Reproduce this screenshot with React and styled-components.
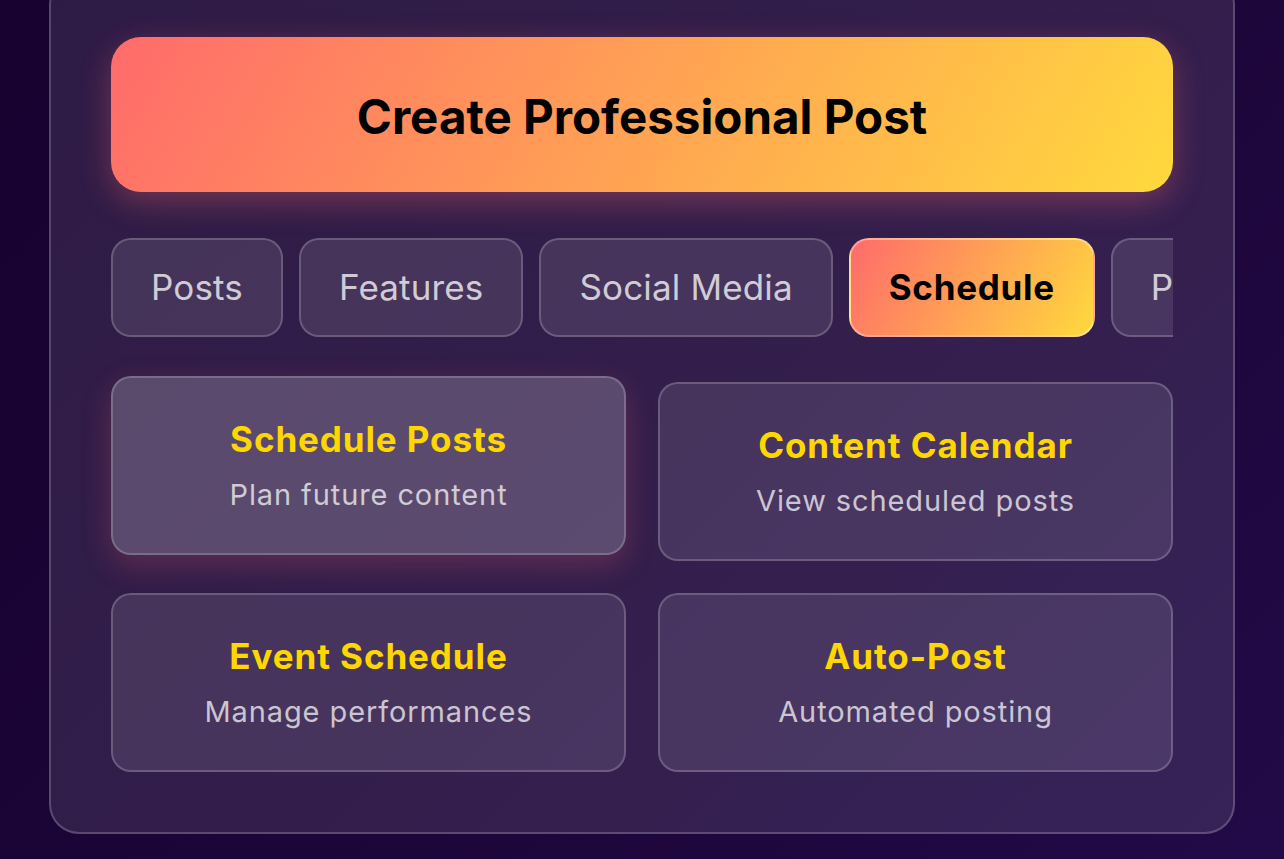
import React, { useState } from 'react';
import styled, { createGlobalStyle } from 'styled-components';

const GlobalStyle = createGlobalStyle`
  html, body {
    margin: 0;
    padding: 0;
    height: 100%;
    overflow: hidden;
  }
  body {
    background: linear-gradient(135deg, #170230 0%, #1c0538 55%, #220a48 100%);
    font-family: Inter, "Noto Sans", "Liberation Sans", sans-serif;
  }
`;

const Page = styled.div`
  min-height: 100vh;
  display: flex;
  justify-content: center;
  align-items: flex-start;
`;

const Panel = styled.div`
  width: 1186px;
  box-sizing: border-box;
  margin-top: -25px;
  padding: 60px;
  background: rgba(255, 255, 255, 0.1);
  border: 2px solid rgba(255, 255, 255, 0.2);
  border-radius: 30px;
  display: flex;
  flex-direction: column;
`;

const CreateButton = styled.button`
  height: 155px;
  padding: 4px 0 0;
  border: none;
  border-radius: 30px;
  background: linear-gradient(120deg, #ff6b6b 0%, #ffd93d 100%);
  box-shadow: 0 10px 32px rgba(255, 107, 107, 0.32);
  font-family: inherit;
  font-size: 47.5px;
  font-weight: 700;
  color: #000;
  cursor: pointer;
`;

const Tabs = styled.div`
  margin-top: 46px;
  display: flex;
  gap: 16px;
  overflow: hidden;
`;

const Tab = styled.button`
  flex: none;
  padding: 27px 38px;
  border-radius: 20px;
  font-family: inherit;
  font-size: 35px;
  line-height: 41px;
  cursor: pointer;
  border: 2px solid ${p => (p.$active ? 'rgba(255, 255, 255, 0.35)' : 'rgba(255, 255, 255, 0.2)')};
  background: ${p => (p.$active ? 'linear-gradient(120deg, #ff6b6b 0%, #ffd93d 100%)' : 'rgba(255, 255, 255, 0.1)')};
  color: ${p => (p.$active ? '#000' : 'rgba(255, 255, 255, 0.75)')};
  font-weight: ${p => (p.$active ? 700 : 400)};
  letter-spacing: ${p => (p.$active ? '0.7px' : '0.15px')};
`;

const Grid = styled.div`
  margin-top: 45px;
  display: grid;
  grid-template-columns: 1fr 1fr;
  gap: 32px;
`;

const Card = styled.div`
  height: 179px;
  box-sizing: border-box;
  border-radius: 20px;
  border: 2px solid rgba(255, 255, 255, 0.2);
  background: ${p => (p.$hover ? 'rgba(255, 255, 255, 0.2)' : 'rgba(255, 255, 255, 0.1)')};
  transform: ${p => (p.$hover ? 'translateY(-6px)' : 'none')};
  box-shadow: ${p => (p.$hover ? '0 10px 30px rgba(255, 107, 107, 0.22)' : 'none')};
  display: flex;
  flex-direction: column;
  align-items: center;
  justify-content: center;
  gap: 19px;
  text-align: center;
`;

const CardTitle = styled.div`
  color: #ffd700;
  font-size: 35px;
  line-height: 40px;
  font-weight: 700;
  letter-spacing: 0.9px;
`;

const CardText = styled.div`
  color: rgba(255, 255, 255, 0.72);
  font-size: 29px;
  line-height: 34px;
  letter-spacing: 0.9px;
`;

const tabs = ['Posts', 'Features', 'Social Media', 'Schedule', 'Promote'];

const cards = [
  { title: 'Schedule Posts', text: 'Plan future content' },
  { title: 'Content Calendar', text: 'View scheduled posts' },
  { title: 'Event Schedule', text: 'Manage performances' },
  { title: 'Auto-Post', text: 'Automated posting' },
];

export default function App() {
  const [active, setActive] = useState('Schedule');

  return (
    <Page>
      <GlobalStyle />
      <Panel>
        <CreateButton>Create Professional Post</CreateButton>
        <Tabs>
          {tabs.map(t => (
            <Tab key={t} $active={t === active} onClick={() => setActive(t)}>
              {t}
            </Tab>
          ))}
        </Tabs>
        <Grid>
          {cards.map((c, i) => (
            <Card key={c.title} $hover={i === 0}>
              <CardTitle>{c.title}</CardTitle>
              <CardText>{c.text}</CardText>
            </Card>
          ))}
        </Grid>
      </Panel>
    </Page>
  );
}
